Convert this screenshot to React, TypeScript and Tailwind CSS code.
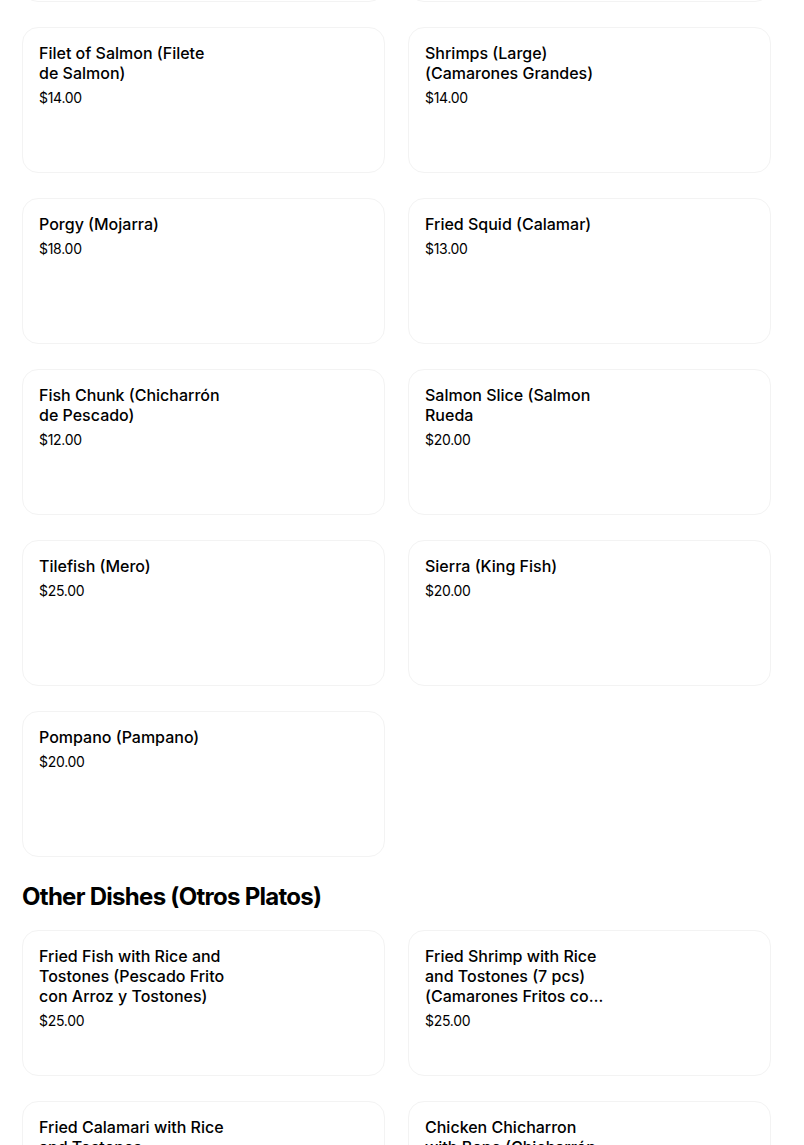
import React from 'react';

type Item = { name: string; price: string };

const prevRow: Item[] = [
  { name: 'Whole Red Snapper (Pargo Rojo)', price: '$20.00' },
  { name: 'Tilapia', price: '$14.00' },
];

const seafood: Item[] = [
  { name: 'Filet of Salmon (Filete de Salmon)', price: '$14.00' },
  { name: 'Shrimps (Large) (Camarones Grandes)', price: '$14.00' },
  { name: 'Porgy (Mojarra)', price: '$18.00' },
  { name: 'Fried Squid (Calamar)', price: '$13.00' },
  { name: 'Fish Chunk (Chicharrón de Pescado)', price: '$12.00' },
  { name: 'Salmon Slice (Salmon Rueda', price: '$20.00' },
  { name: 'Tilefish (Mero)', price: '$25.00' },
  { name: 'Sierra (King Fish)', price: '$20.00' },
  { name: 'Pompano (Pampano)', price: '$20.00' },
];

const otherDishes: Item[] = [
  { name: 'Fried Fish with Rice and Tostones (Pescado Frito con Arroz y Tostones)', price: '$25.00' },
  { name: 'Fried Shrimp with Rice and Tostones (7 pcs) (Camarones Fritos con Arroz y Tostones)', price: '$25.00' },
  { name: 'Fried Calamari with Rice and Tostones (Calamares Fritos con Arroz y Tostones)', price: '$25.00' },
  { name: 'Chicken Chicharron with Bone (Chicharrón de Pollo con Hueso)', price: '$18.00' },
];

const MenuCard: React.FC<{ item: Item }> = ({ item }) => (
  <div className="h-[146px] rounded-2xl border border-[#f3f3f3] bg-white px-4 pt-[15px]">
    <div className="max-w-[186px] text-[16px] leading-5 font-medium text-black line-clamp-3">
      {item.name}
    </div>
    <div className="mt-[5px] text-[14px] leading-5 text-black tracking-[-0.02em]">{item.price}</div>
  </div>
);

export default function App() {
  return (
    <div
      className="min-h-screen bg-white pl-[22px] overflow-hidden"
      style={{ fontFamily: 'Inter, "Noto Sans", sans-serif' }}
    >
      <div className="grid grid-cols-[363px_363px] gap-x-[23px] gap-y-[25px] -mt-[144px]">
        {prevRow.map((it) => (
          <MenuCard key={it.name} item={it} />
        ))}
        {seafood.map((it) => (
          <MenuCard key={it.name} item={it} />
        ))}
      </div>
      <h2 className="mt-6 mb-[17px] text-[24px] leading-8 font-bold tracking-[-0.03em] text-black">
        Other Dishes (Otros Platos)
      </h2>
      <div className="grid grid-cols-[363px_363px] gap-x-[23px] gap-y-[25px] pb-10">
        {otherDishes.map((it) => (
          <MenuCard key={it.name} item={it} />
        ))}
      </div>
    </div>
  );
}
